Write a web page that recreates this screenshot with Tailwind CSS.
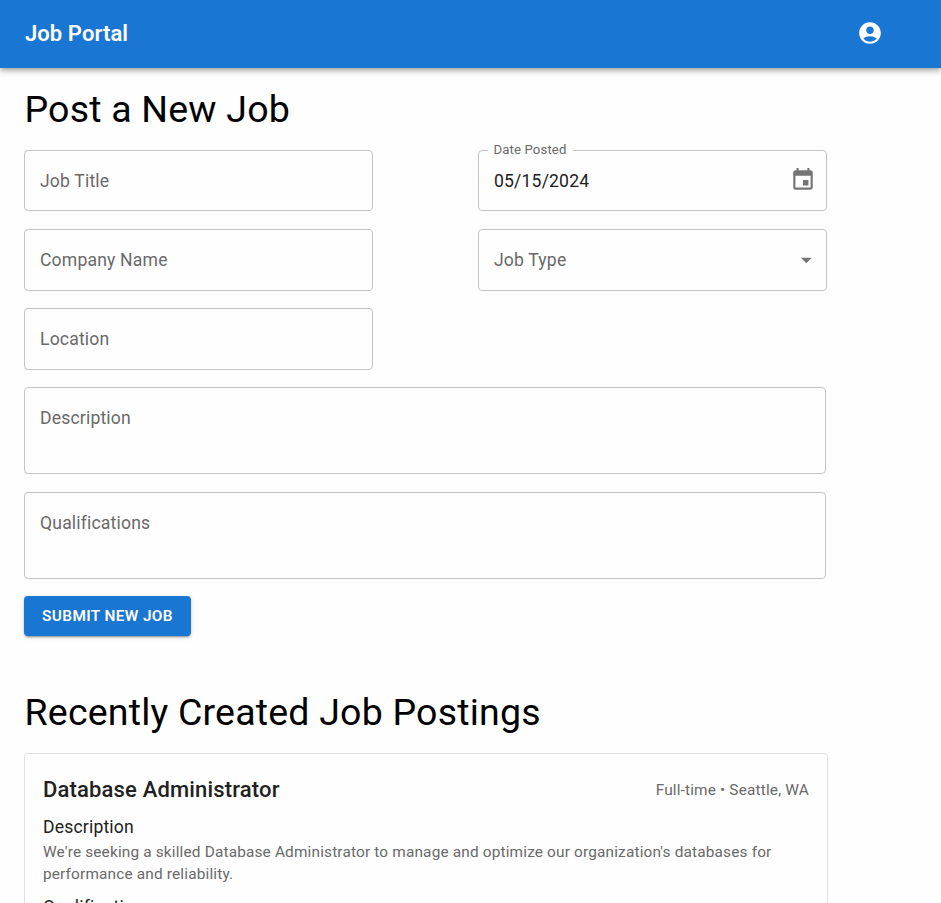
<!DOCTYPE html>
<html lang="en"><head><meta charset="utf-8"><title>Job Portal</title>
<script src="https://cdn.jsdelivr.net/npm/@tailwindcss/browser@4"></script></head>
<body class="flex h-[903px] flex-col overflow-hidden bg-[#fefefe] font-[Roboto,sans-serif] text-black">
<header class="relative flex h-[68px] shrink-0 items-center justify-between bg-[#1976d2] pr-[58px] pl-[25px] text-white shadow-[0_2px_4px_-1px_rgba(0,0,0,.2),0_4px_5px_rgba(0,0,0,.14),0_1px_10px_rgba(0,0,0,.12)]">
<div class="text-[22px] leading-8 font-semibold tracking-[0.08px]">Job Portal</div>
<svg class="mb-[2px] size-[26px]" viewBox="0 0 24 24" fill="currentColor"><path d="M12 2C6.480 2 2 6.480 2 12s4.480 10 10 10 10-4.480 10-10S17.520 2 12 2zm0 4c1.930 0 3.500 1.570 3.500 3.500S13.930 13 12 13s-3.500-1.570-3.500-3.500S10.070 6 12 6zm0 14c-2.030 0-4.430-.82-6.140-2.880C7.550 15.800 9.680 15 12 15s4.450.8 6.140 2.120C16.430 19.180 14.030 20 12 20z"/></svg>
</header>
<main class="flex min-h-0 flex-1 flex-col pt-[18px] pl-6">
<h1 class="h-[64px] shrink-0 pl-[0.500px] text-[37.500px] leading-[46px] tracking-[0.2px]">Post a New Job</h1>
<form class="w-[803px] shrink-0 text-[17.600px] tracking-[0.165px] text-[#696969]">
<div class="flex justify-between">
<div class="flex w-[349px] flex-col">
<div class="flex h-[61px] items-center rounded-[4px] border border-[#c4c4c4] px-[15px] pt-px">Job Title</div>
<div class="mt-[18px] flex h-[62px] items-center rounded-[4px] border border-[#c4c4c4] px-[15px]">Company Name</div>
<div class="mt-[17px] flex h-[62px] items-center rounded-[4px] border border-[#c4c4c4] px-[15px]">Location</div>
</div>
<div class="flex w-[349px] flex-col">
<div class="relative flex h-[61px] items-center justify-between rounded-[4px] border border-[#c4c4c4] pt-px pr-[10px] pl-[15px] text-[#212121]"><span class="absolute top-[-9px] left-[9px] bg-[#fefefe] pr-[6px] pl-[5.500px] text-[13.200px] leading-4 tracking-[0.12px] text-[#696969]">Date Posted</span>05/15/2024
<svg class="mb-[3px] size-[26px] text-[#757575]" viewBox="0 0 24 24" fill="currentColor"><path d="M17 12h-5v5h5v-5zM16 1v2H8V1H6v2H5c-1.110 0-1.990.9-1.990 2L3 19c0 1.100.89 2 2 2h14c1.100 0 2-.9 2-2V5c0-1.100-.9-2-2-2h-1V1h-2zm3 18H5V8h14v11z"/></svg></div>
<div class="mt-[18px] flex h-[62px] items-center justify-between rounded-[4px] border border-[#c4c4c4] pr-[7px] pl-[15px]">Job Type<svg class="size-[26px] text-[#757575]" viewBox="0 0 24 24" fill="currentColor"><path d="M7.300 10l5 5 5-5z"/></svg></div>
</div></div>
<div class="mt-[17px] h-[87px] w-[802px] rounded-[4px] border border-[#c4c4c4] px-[15px] pt-[17px] leading-[26px]">Description</div>
<div class="mt-[18px] h-[87px] w-[802px] rounded-[4px] border border-[#c4c4c4] px-[15px] pt-[17px] leading-[26px]">Qualifications</div>
<button type="button" class="mt-[17px] flex h-10 w-[167px] items-center justify-center rounded-[4px] bg-[#1976d2] pt-px text-[15.400px] font-semibold tracking-[0.38px] text-white shadow-[0_3px_1px_-2px_rgba(0,0,0,.2),0_2px_2px_rgba(0,0,0,.14),0_1px_5px_rgba(0,0,0,.12)]">SUBMIT NEW JOB</button>
</form>
<h2 class="mt-[53px] h-[64px] shrink-0 pl-[0.500px] text-[37.500px] leading-[46px] tracking-[0.2px]">Recently Created Job Postings</h2>
<article class="min-h-0 w-[804px] flex-1 overflow-hidden rounded-t-[4px] border border-b-0 border-[#e0e0e0] px-[18px] pt-[18px]">
<div class="flex items-center justify-between"><h3 class="text-[22px] leading-[35px] font-medium tracking-[0.165px] text-[#212121]">Database Administrator</h3><span class="pt-[3px] text-[15.400px] tracking-[0.16px] text-[#696969]">Full-time • Seattle, WA</span></div>
<h4 class="mt-[7px] text-[17.600px] leading-[27px] tracking-[0.165px] text-[#212121]">Description</h4>
<p class="text-[15.400px] leading-[22px] tracking-[0.16px] text-[#696969]">We're seeking a skilled Database Administrator to manage and optimize our organization's databases for performance and reliability.</p>
<h4 class="mt-[9px] text-[17.600px] leading-[27px] tracking-[0.165px] text-[#212121]">Qualifications</h4>
</article></main></body></html>
